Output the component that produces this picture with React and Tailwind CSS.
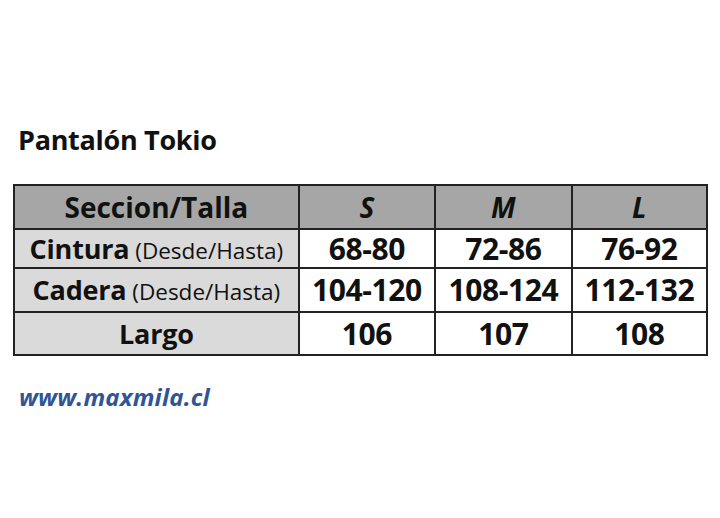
export default function App() {
  const rows = [
    { label: 'Cintura', note: '(Desde/Hasta)', values: ['68-80', '72-86', '76-92'], h: 'h-[39px]' },
    { label: 'Cadera', note: '(Desde/Hasta)', values: ['104-120', '108-124', '112-132'], h: 'h-[44px]' },
    { label: 'Largo', note: null, values: ['106', '107', '108'], h: 'h-[43px]' },
  ];

  return (
    <div
      className="w-[720px] h-[518px] bg-white text-[#111] overflow-hidden"
      style={{ fontFamily: '"Open Sans", Lato, sans-serif' }}
    >
      <h1 className="pl-[18px] pt-[122px] text-[27px] font-bold leading-[36px] tracking-[-0.3px]">Pantalón Tokio</h1>

      <table className="ml-[13px] mt-[26px] w-[695px] border-collapse border-2 border-[#222] text-center">
        <colgroup>
          <col className="w-[285px]" />
          <col className="w-[137px]" />
          <col className="w-[137px]" />
          <col className="w-[136px]" />
        </colgroup>
        <thead>
          <tr className="h-[44px] bg-[#a6a6a6]">
            <th className="border-2 border-[#222] text-[28px] font-bold leading-none">Seccion/Talla</th>
            <th className="border-2 border-[#222] text-[28px] font-bold italic leading-none">S</th>
            <th className="border-2 border-[#222] text-[28px] font-bold italic leading-none">M</th>
            <th className="border-2 border-[#222] text-[28px] font-bold italic leading-none">L</th>
          </tr>
        </thead>
        <tbody>
          {rows.map((r) => (
            <tr key={r.label} className={r.h}>
              <td className="border-2 border-[#222] bg-[#dadada] leading-none whitespace-nowrap">
                <span className="text-[27px] font-bold tracking-[-0.2px]">{r.label}</span>
                {r.note && <span className="text-[22.5px]"> {r.note}</span>}
              </td>
              {r.values.map((v) => (
                <td key={v} className="border-2 border-[#222] text-[30px] font-bold leading-none tracking-[-0.4px]">
                  {v}
                </td>
              ))}
            </tr>
          ))}
        </tbody>
      </table>

      <p className="pl-[19px] mt-[26px] text-[24px] font-bold italic text-[#2f5597] leading-[30px] tracking-[0.2px]">
        www.maxmila.cl
      </p>
    </div>
  );
}
